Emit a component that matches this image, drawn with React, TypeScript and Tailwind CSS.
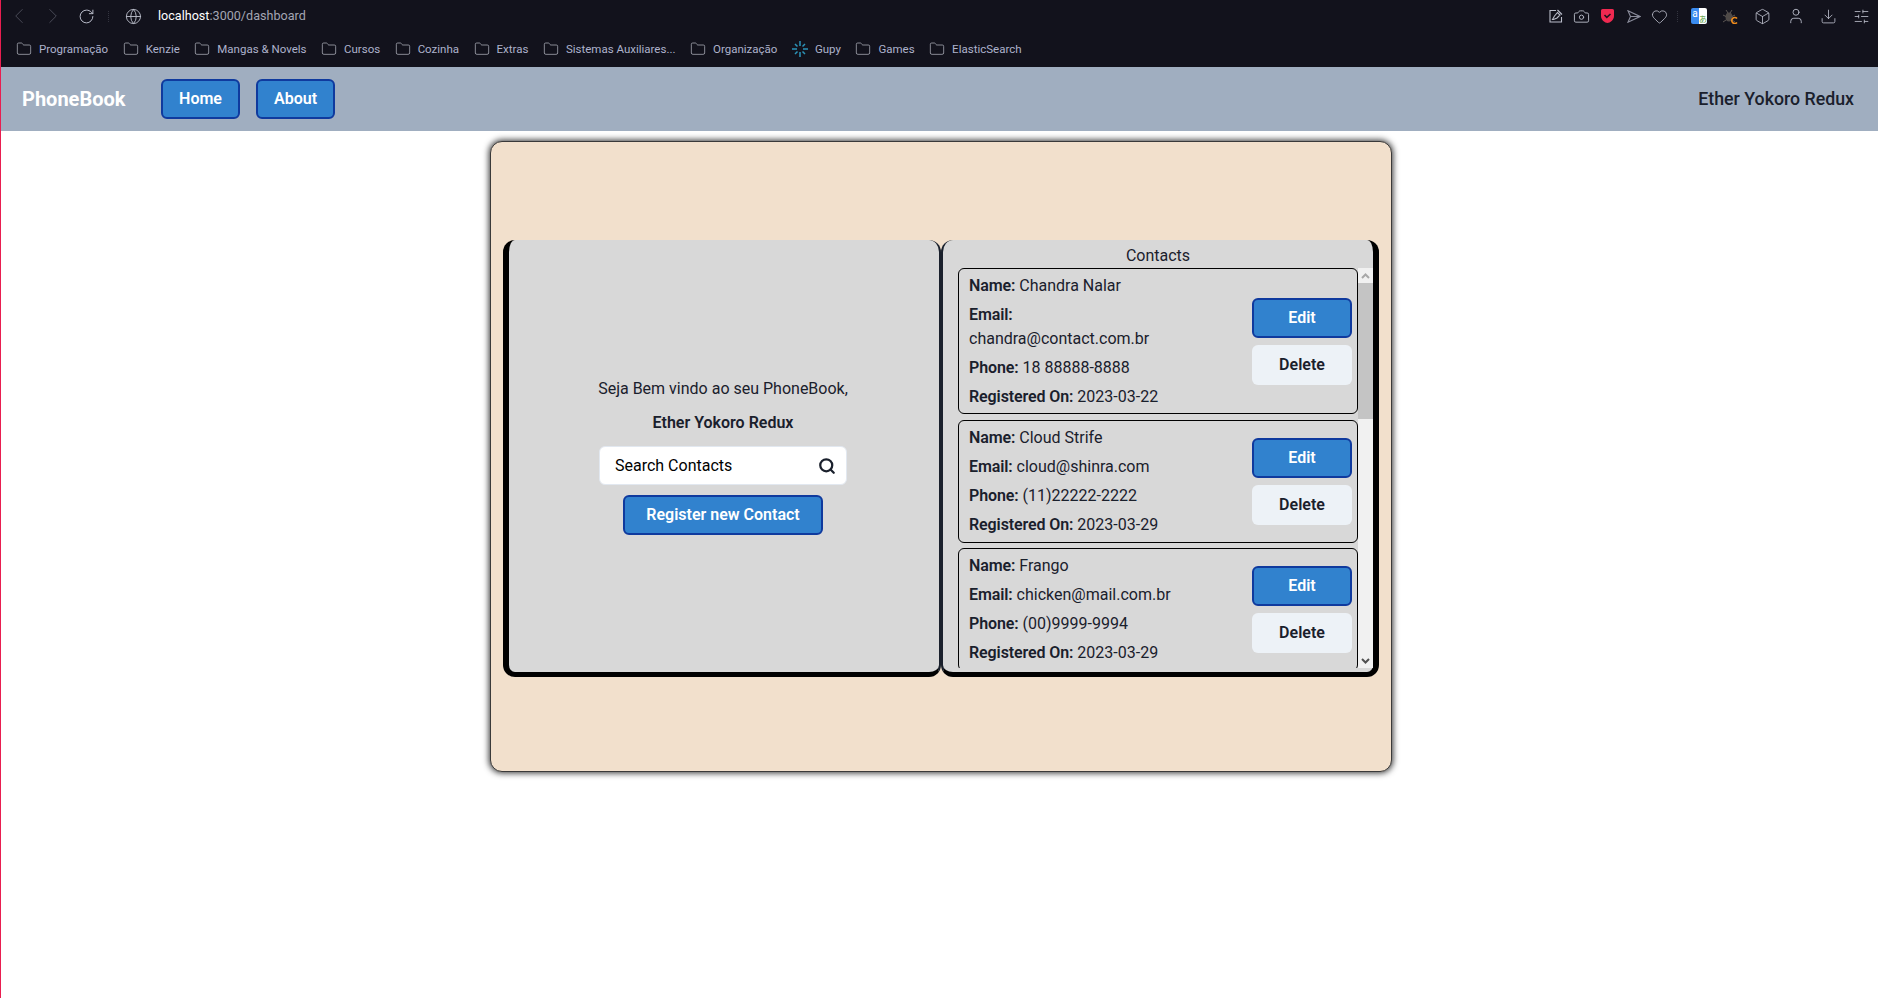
import { ChevronLeft, ChevronRight, RotateCw, Globe, Folder, Camera, Heart, Box, User, Download, SlidersHorizontal, Search } from "lucide-react";

const bookmarks = ["Programação", "Kenzie", "Mangas & Novels", "Cursos", "Cozinha", "Extras", "Sistemas Auxiliares...", "Organização", "Gupy", "Games", "ElasticSearch"];

const contacts = [
  { name: "Chandra Nalar", email: "chandra@contact.com.br", phone: "18 88888-8888", date: "2023-03-22", wrap: true },
  { name: "Cloud Strife", email: "cloud@shinra.com", phone: "(11)22222-2222", date: "2023-03-29", wrap: false },
  { name: "Frango", email: "chicken@mail.com.br", phone: "(00)9999-9994", date: "2023-03-29", wrap: false },
];

const BlueButton = ({ label, className }: { label: string; className: string }) => (
  <button className={`h-10 rounded-md border-2 border-[#0f3a9e] bg-[#3182ce] text-base font-semibold text-white ${className}`}>
    {label}
  </button>
);

const GupyIcon = () => (
  <svg width="16" height="16" viewBox="0 0 16 16" stroke="#2b93b8" strokeWidth="1.5" fill="none">
    <path d="M8 0v5M8 11v5M0 8h5M11 8h5M3 3l2.500 2.500M13 3l-2.500 2.500M3 13l2.500-2.500M13 13l-2.500-2.500" />
  </svg>
);

const BrowserBar = () => (
  <div className="h-[67px] shrink-0 bg-[#12121c] font-['Roboto',sans-serif]">
    <div className="flex h-[32px] items-center pl-[5px] pr-2 text-[#b9bcc9]">
      <ChevronLeft size={26} strokeWidth={0.9} className="text-[#4a4b57]" />
      <ChevronRight size={26} strokeWidth={0.9} className="ml-2 text-[#4a4b57]" />
      <RotateCw size={17} strokeWidth={1.4} className="ml-3" />
      <div className="ml-[13px] h-[11px] w-0 border-l border-dotted border-[#33343f]" />
      <Globe size={17} strokeWidth={1.3} className="ml-4" />
      <span className="ml-4 text-[12.6px] text-white">
        localhost<span className="text-[#a3a5b3]">:3000/dashboard</span>
      </span>
      <div className="ml-auto flex items-center">
        <svg width="14" height="14" viewBox="0 0 14 14" fill="none" stroke="#b9bcc9" strokeWidth="1.1">
          <path d="M7 1.500H1v11.500h11.500V8" />
          <path d="M3.500 10.500l2-3.500 3-3.500 2.500 2.500-3 3-3.500 1.500zM8.500 1l4.500 4.500" />
        </svg>
        <Camera size={17} strokeWidth={1.3} className="ml-[10px]" />
        <svg width="13" height="14" viewBox="0 0 13 14" className="ml-[11px]">
          <path d="M1.500 0h10A1.500 1.500 0 0 1 13 1.500V7c0 4-4 7-6.500 7S0 11 0 7V1.500A1.500 1.500 0 0 1 1.500 0z" fill="#ef2950" />
          <path d="M3.500 6l2.300 2.300L9.500 5" fill="none" stroke="#20121c" strokeWidth="1.600" />
        </svg>
        <svg width="14" height="13" viewBox="0 0 14 13" fill="none" stroke="#8a8c9b" strokeWidth="1.1" className="ml-[13px]">
          <path d="M1 .8l12 5.700-12 5.700 2.500-5.700zM3.500 6.500H13" />
        </svg>
        <Heart size={17} strokeWidth={1.2} className="ml-[10px]" />
        <div className="ml-[9px] h-[11px] w-0 border-l border-dotted border-[#33343f]" />
        <div className="ml-[13px] flex h-4 w-4 overflow-hidden rounded-[2px] text-[10px] leading-none">
          <span className="flex w-2 items-start justify-center bg-[#3b8cf0] pt-[1px] text-white">a</span>
          <span className="flex w-2 items-end justify-center bg-white pb-[1px] font-['Noto_Sans_CJK_JP',sans-serif] text-[8px] text-[#5a9e3a]">あ</span>
        </div>
        <svg width="15" height="15" viewBox="0 0 15 15" className="ml-4">
          <ellipse cx="6" cy="8" rx="3.500" ry="4.500" fill="#4f4a48" />
          <path d="M3 1l2 3M9 1L7 4M0 6l3 1.500M12 6L9 7.500M0 13l3-2M12 13l-3-2" stroke="#5c5754" strokeWidth="1" />
          <path d="M14 9.500a3 3 0 1 0 0 4" fill="none" stroke="#f08c1c" strokeWidth="1.600" />
        </svg>
        <Box size={17} strokeWidth={1.2} className="ml-4" />
        <User size={18} strokeWidth={1.2} className="ml-4" />
        <Download size={17} strokeWidth={1.2} className="ml-[15px]" />
        <SlidersHorizontal size={17} strokeWidth={1.2} className="ml-4" />
      </div>
    </div>
    <div className="flex h-[34px] items-center gap-[14.5px] pl-[15px] text-[11.5px] text-[#aeb3cc]">
      {bookmarks.map((item) => (
        <div key={item} className="flex items-center gap-[7px]">
          {item === "Gupy" ? <GupyIcon /> : <Folder size={16} strokeWidth={1} className="text-[#c3c5d0]" />}
          <span>{item}</span>
        </div>
      ))}
    </div>
  </div>
);

const NavBar = () => (
  <nav className="flex h-[64px] shrink-0 items-center bg-[#a0aec0] pl-[21px] pr-6 text-[#1a202c]">
    <span className="w-[139px] text-xl font-bold text-white">PhoneBook</span>
    <BlueButton label="Home" className="w-[79px]" />
    <BlueButton label="About" className="ml-4 w-[79px]" />
    <span className="ml-auto text-[17.75px] font-medium">Ether Yokoro Redux</span>
  </nav>
);

const ContactCard = ({ name, email, phone, date, wrap }: (typeof contacts)[number]) => (
  <li className={`flex shrink-0 items-center justify-between rounded-md border border-black pl-[10px] pr-[5px] pt-[5px] ${wrap ? "pb-1" : "pb-[5px]"}`}>
    <div className="flex flex-col gap-[5px]">
      <p><b className="font-semibold tracking-[-0.1px]">Name:</b> {name}</p>
      {wrap ? (
        <p><b className="font-semibold tracking-[-0.1px]">Email:</b> <br />{email}</p>
      ) : (
        <p><b className="font-semibold tracking-[-0.1px]">Email:</b> {email}</p>
      )}
      <p><b className="font-semibold tracking-[-0.1px]">Phone:</b> {phone}</p>
      <p><b className="font-semibold tracking-[-0.1px]">Registered On:</b> {date}</p>
    </div>
    <div className="flex w-[100px] flex-col gap-[7px]">
      <BlueButton label="Edit" className="w-full" />
      <button className="h-10 w-full rounded-md bg-[#edf2f7] font-semibold">Delete</button>
    </div>
  </li>
);

const Scrollbar = () => (
  <div className="flex w-[15px] shrink-0 flex-col bg-[#f1f1f1]">
    <div className="flex h-[15px] items-center justify-center">
      <svg width="9" height="6" viewBox="0 0 9 6" fill="none" stroke="#a8a8a8" strokeWidth="2"><path d="M1 5l3.500-3.500L8 5" /></svg>
    </div>
    <div className="h-[136px] bg-[#c4c4c4]" />
    <div className="mt-auto flex h-[15px] items-center justify-center">
      <svg width="9" height="6" viewBox="0 0 9 6" fill="none" stroke="#505050" strokeWidth="2"><path d="M1 1l3.500 3.500L8 1" /></svg>
    </div>
  </div>
);

export default function App() {
  return (
    <div className="flex h-screen flex-col overflow-hidden border-l border-[#e91e50] bg-white font-['Roboto',sans-serif] text-base leading-6 text-[#1a202c]">
      <BrowserBar />
      <NavBar />
      <main className="pl-[489px] pt-[10px]">
        <section className="flex h-[631px] w-[902px] items-start rounded-xl border border-[#3a3a3a] bg-[#f2e0cc] pl-[12px] pt-[98px] shadow-[0_0_6px_1px_rgba(0,0,0,0.8)]">
          <div className="flex h-[437px] w-[438px] flex-col items-center justify-center rounded-xl border-b-[5px] border-l-[6px] border-r-2 border-b-black border-l-black border-r-[#1a202c] bg-[#d8d8d8] pr-[2px]">
            <p>Seja Bem vindo ao seu PhoneBook,</p>
            <p className="mt-[10px] font-semibold">Ether Yokoro Redux</p>
            <div className="mt-[11px] flex h-[39px] w-[248px] items-center rounded-md border border-[#e2e8f0] bg-white pl-[15px] pr-[10px]">
              <input placeholder="Search Contacts" className="min-w-0 flex-1 bg-transparent text-base outline-none placeholder:text-black" />
              <Search size={18} strokeWidth={3} />
            </div>
            <BlueButton label="Register new Contact" className="mt-[10px] w-[200px]" />
          </div>
          <div className="flex h-[437px] w-[438px] flex-col rounded-xl border-b-[5px] border-l-2 border-r-[6px] border-b-black border-l-[#1a202c] border-r-black bg-[#d8d8d8] pb-1 pl-[15px] pt-1">
            <h2 className="-ml-[15px] h-6 shrink-0 text-center">Contacts</h2>
            <div className="flex min-h-0 flex-1">
              <ul className="flex min-w-0 flex-1 flex-col gap-[5.6px] overflow-hidden">
                {contacts.map((contact) => (
                  <ContactCard key={contact.email} {...contact} />
                ))}
              </ul>
              <Scrollbar />
            </div>
          </div>
        </section>
      </main>
    </div>
  );
}
